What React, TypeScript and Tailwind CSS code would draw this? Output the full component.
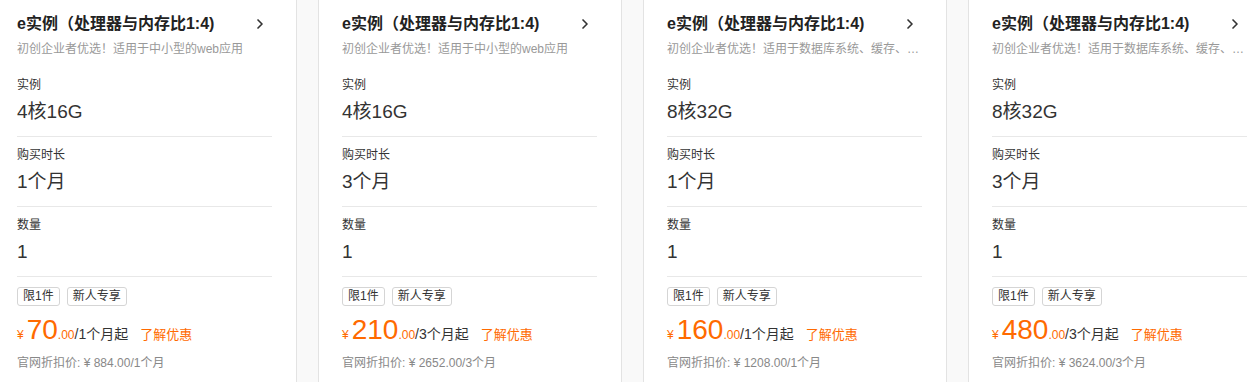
import { ChevronRight } from 'lucide-react';

interface Plan {
  desc: string;
  spec: string;
  term: string;
  price: string;
  unit: string;
  original: string;
}

const plans: Plan[] = [
  { desc: '初创企业者优选！适用于中小型的web应用', spec: '4核16G', term: '1个月', price: '70', unit: '/1个月起', original: '¥ 884.00/1个月' },
  { desc: '初创企业者优选！适用于中小型的web应用', spec: '4核16G', term: '3个月', price: '210', unit: '/3个月起', original: '¥ 2652.00/3个月' },
  { desc: '初创企业者优选！适用于数据库系统、缓存、搜索集群等场景', spec: '8核32G', term: '1个月', price: '160', unit: '/1个月起', original: '¥ 1208.00/1个月' },
  { desc: '初创企业者优选！适用于数据库系统、缓存、搜索集群等场景', spec: '8核32G', term: '3个月', price: '480', unit: '/3个月起', original: '¥ 3624.00/3个月' },
];

const Field = ({ label, value, first }: { label: string; value: string; first?: boolean }) => (
  <div className={first ? 'pb-3' : 'border-t border-[#e8e8e8] pt-[9px] pb-3'}>
    <div className="text-xs leading-[18px] text-[#333]">{label}</div>
    <div className="mt-[6px] text-[19px] leading-6 text-[#333]">{value}</div>
  </div>
);

const PlanCard = ({ plan }: { plan: Plan }) => (
  <div className="w-[304px] shrink-0 border-x border-[#e3e3e3] bg-white pt-3 pr-6 pb-6 pl-[23px]">
    <div className="flex items-center justify-between">
      <div className="text-base font-bold leading-6 text-[#222]">e实例（处理器与内存比1:4)</div>
      <ChevronRight className="mr-1 h-4 w-4 text-[#333]" strokeWidth={2.5} />
    </div>
    <div className="mt-1 truncate text-xs leading-[18px] text-[#999]">{plan.desc}</div>
    <div className="mt-[18px]">
      <Field label="实例" value={plan.spec} first />
      <Field label="购买时长" value={plan.term} />
      <Field label="数量" value="1" />
    </div>
    <div className="border-t border-[#e8e8e8] pt-[10px]">
      <div className="flex gap-[7px]">
        <span className="rounded-[3px] border border-[#d5d5d5] px-[5px] text-xs leading-[17px] text-[#333]">限1件</span>
        <span className="rounded-[3px] border border-[#d5d5d5] px-[5px] text-xs leading-[17px] text-[#333]">新人专享</span>
      </div>
      <div className="mt-2 flex items-baseline leading-8">
        <span className="mr-[3px] text-xs text-[#ff6a00]">¥</span>
        <span className="text-[28px] text-[#ff6a00]">{plan.price}</span>
        <span className="text-xs text-[#ff6a00]">.00</span>
        <span className="text-sm text-[#333]">{plan.unit}</span>
        <span className="ml-3 text-[13px] text-[#ff6a00]">了解优惠</span>
      </div>
      <div className="mt-[3px] text-xs leading-[18px] text-[#888]">官网折扣价: {plan.original}</div>
    </div>
  </div>
);

export default function App() {
  return (
    <div
      className="h-[382px] w-[1251px] overflow-hidden bg-[#f9f9f9]"
      style={{ fontFamily: '"Liberation Sans", Arial, "Noto Sans CJK SC", sans-serif' }}
    >
      <div className="-ml-[7px] flex gap-[21px]">
        {plans.map((p, i) => (
          <PlanCard key={i} plan={p} />
        ))}
      </div>
    </div>
  );
}
